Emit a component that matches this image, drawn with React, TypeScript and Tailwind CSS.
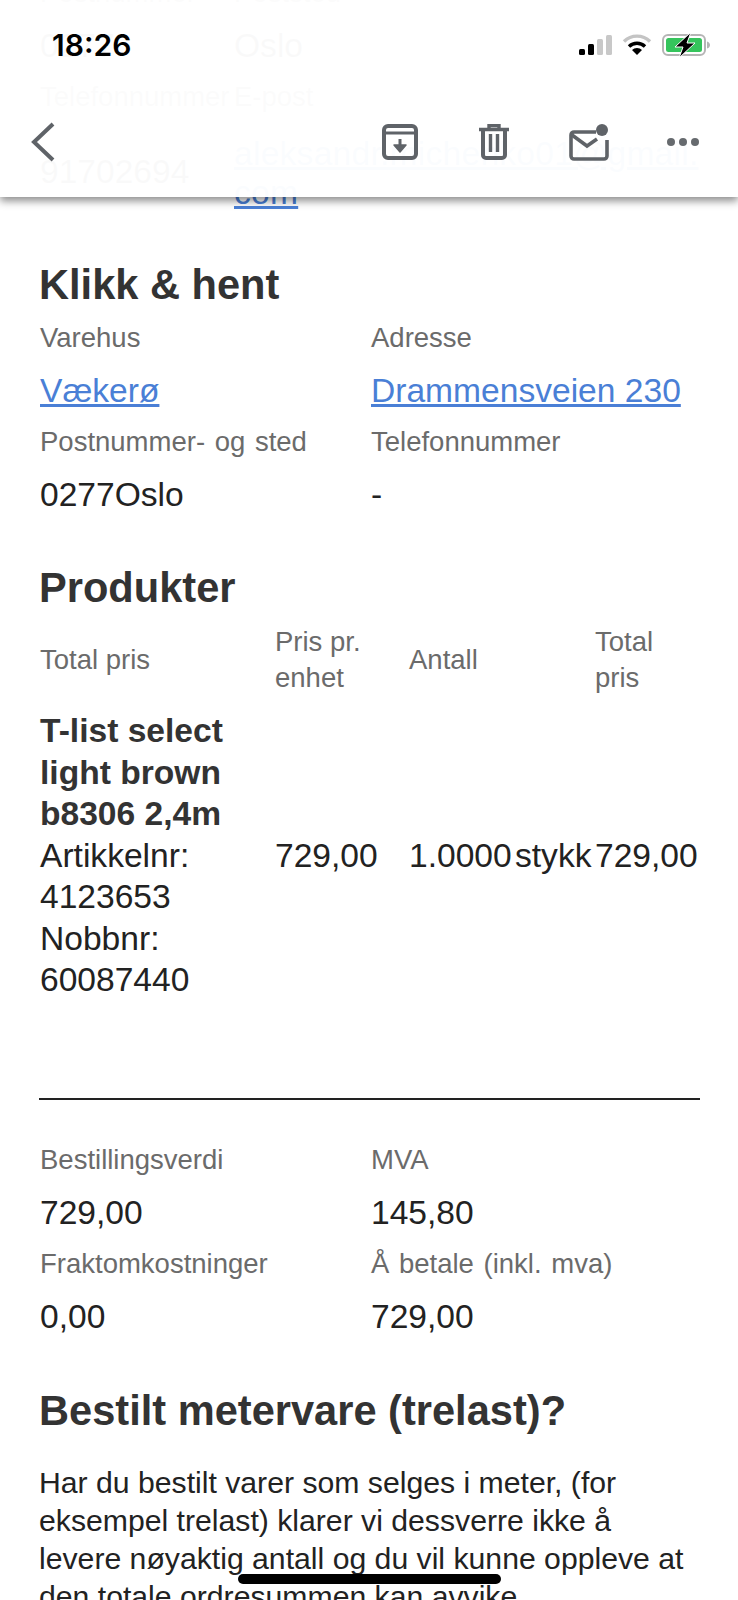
const sans = "font-['Liberation_Sans',Arial,sans-serif]";

function Field({ label, children }: { label: string; children: React.ReactNode }) {
  return (
    <div>
      <div className="h-[52px] text-[27.5px] leading-[50px] [word-spacing:2px] text-[#6b6b6b]">{label}</div>
      <div className="min-h-[52px] text-[33.6px] leading-[52px] text-[#222]">{children}</div>
    </div>
  );
}

function TopBar() {
  return (
    <div className="absolute top-0 left-0 w-full h-[197px] bg-white/[0.975] shadow-[0_4px_8px_rgba(0,0,0,0.45)]">
      <div className="flex items-center justify-between pl-[52px] pr-[27px] pt-[27px]">
        <span className="font-['Inter',sans-serif] text-[30px] leading-[36px] font-semibold text-black">18:26</span>
        <div className="flex items-center gap-[10px]">
          <svg width="34" height="22" viewBox="0 0 34 22">
            <rect x="1" y="15" width="6" height="6" rx="1.5" fill="#000" />
            <rect x="10" y="10" width="6" height="11" rx="1.5" fill="#000" />
            <rect x="19" y="5" width="6" height="16" rx="1.5" fill="#c8c8c8" />
            <rect x="28" y="1" width="6" height="20" rx="1.5" fill="#c8c8c8" />
          </svg>
          <svg width="30" height="22" viewBox="0 0 30 22">
            <path d="M2 7.5a18.5 18.5 0 0 1 26 0" fill="none" stroke="#c4c4c4" strokeWidth="3.4" />
            <path d="M7 12.5a11.5 11.5 0 0 1 16 0" fill="none" stroke="#000" strokeWidth="3.4" />
            <path d="M15 21l-5-5a7 7 0 0 1 10 0z" fill="#000" />
          </svg>
          <svg width="49" height="26" viewBox="0 0 49 26">
            <rect x="1" y="3" width="42" height="20" rx="5" fill="none" stroke="#b5b5b5" strokeWidth="2" />
            <rect x="4" y="6" width="36" height="14" rx="2.5" fill="#35c45c" />
            <path d="M45 9.5c2 .5 3 2 3 3.5s-1 3-3 3.5z" fill="#b5b5b5" />
            <path d="M29 0L13 15h8l-4 11 16-15h-8z" fill="#000" stroke="#fff" strokeWidth="1" />
          </svg>
        </div>
      </div>
      <div className="flex items-center pl-[30px] pr-[39px] pt-[59px]">
        <svg width="26" height="40" viewBox="0 0 26 40" className="mr-auto">
          <path d="M23 2L4 20l19 18" fill="none" stroke="#5f6368" strokeWidth="4" />
        </svg>
        <svg width="36" height="36" viewBox="0 0 36 36" className="mr-[60px]">
          <path d="M6 2h24a4 4 0 0 1 4 4v24a4 4 0 0 1-4 4H6a4 4 0 0 1-4-4V6a4 4 0 0 1 4-4z" fill="none" stroke="#5f6368" strokeWidth="4" />
          <path d="M3 9h30" stroke="#5f6368" strokeWidth="3" />
          <path d="M18 15v8" stroke="#5f6368" strokeWidth="3" />
          <path d="M12 21h12l-6 7z" fill="#5f6368" stroke="#5f6368" strokeWidth="1.5" strokeLinejoin="round" />
        </svg>
        <svg width="32" height="36" viewBox="0 0 32 36" className="mr-[59px]">
          <path d="M1 5.5h30M11 5V1.5h10V5" fill="none" stroke="#5f6368" strokeWidth="3.4" />
          <path d="M5 7v24a3 3 0 0 0 3 3h16a3 3 0 0 0 3-3V7" fill="none" stroke="#5f6368" strokeWidth="4" />
          <path d="M12.5 10v18M19.5 10v18" stroke="#5f6368" strokeWidth="3.4" />
        </svg>
        <svg width="40" height="37" viewBox="0 0 40 37" className="mr-[58px]">
          <path d="M27 8H5a3 3 0 0 0-3 3v21a3 3 0 0 0 3 3h30a3 3 0 0 0 3-3V16" fill="none" stroke="#5f6368" strokeWidth="3.6" />
          <path d="M3 11l15 11 10-7" fill="none" stroke="#5f6368" strokeWidth="3.6" />
          <circle cx="33" cy="6" r="6" fill="#5f6368" />
        </svg>
        <div className="flex gap-[4px]">
          <span className="size-[8px] rounded-full bg-[#666a6e]" />
          <span className="size-[8px] rounded-full bg-[#666a6e]" />
          <span className="size-[8px] rounded-full bg-[#666a6e]" />
        </div>
      </div>
    </div>
  );
}

export default function App() {
  return (
    <div className={`relative h-[1600px] w-[738px] overflow-hidden bg-white ${sans}`}>
      <div className="pl-[40px] pr-[38px] -mt-[32px]">
        {/* kundeinfo, ligger bak toppen */}
        <div className="grid grid-cols-[194px_1fr]">
          <Field label="Postnummer">0277</Field>
          <Field label="Poststed">Oslo</Field>
          <div>
            <div className="h-[52px] text-[27.5px] leading-[50px] text-[#6b6b6b] whitespace-nowrap">Telefonnummer</div>
            <div className="text-[33.6px] leading-[52px] text-[#222] pt-[22px]">91702694</div>
          </div>
          <div>
            <div className="h-[52px] text-[27.5px] leading-[50px] text-[#6b6b6b]">E-post</div>
            <a className="block text-[33.6px] leading-[39px] tracking-[0.25px] text-[#4a7fd6] underline break-all pt-[10px]">aleksandr.michenko01@gmail.com</a>
          </div>
        </div>

        <h2 className="mt-[47px] mb-[2px] text-[41.6px] leading-[52px] font-bold text-[#333] -ml-px">Klikk &amp; hent</h2>
        <div className="grid grid-cols-[331px_1fr]">
          <Field label="Varehus"><a className="text-[#4a7fd6] underline">Vækerø</a></Field>
          <Field label="Adresse"><a className="text-[#4a7fd6] underline">Drammensveien 230</a></Field>
          <Field label="Postnummer- og sted">0277Oslo</Field>
          <Field label="Telefonnummer">-</Field>
        </div>

        <h2 className="mt-[41px] text-[41.6px] leading-[52px] font-bold text-[#333] -ml-px">Produkter</h2>
        <div className="mt-[10px] grid grid-cols-[235px_134px_186px_1fr] items-center text-[27.5px] leading-[36px] text-[#6b6b6b]">
          <div>Total pris</div>
          <div>Pris pr.<br />enhet</div>
          <div>Antall</div>
          <div>Total<br />pris</div>
        </div>
        <div className="mt-[14px] grid grid-cols-[235px_134px_106px_80px_1fr] items-center text-[33.6px] leading-[41.5px] text-[#222]">
          <div>
            <div className="font-bold text-[#333]">T-list select<br />light brown<br />b8306 2,4m</div>
            <div>Artikkelnr:<br />4123653<br />Nobbnr:<br />60087440</div>
          </div>
          <div className="whitespace-nowrap">729,00</div>
          <div className="whitespace-nowrap">1.0000</div>
          <div className="whitespace-nowrap">stykk</div>
          <div className="whitespace-nowrap">729,00</div>
        </div>

        <div className="mt-[97px] h-[2px] bg-[#222] -ml-px" />

        <div className="mt-[35px] grid grid-cols-[331px_1fr]">
          <Field label="Bestillingsverdi">729,00</Field>
          <Field label="MVA">145,80</Field>
          <Field label="Fraktomkostninger">0,00</Field>
          <Field label="Å betale (inkl. mva)">729,00</Field>
        </div>

        <h2 className="mt-[42px] text-[41.6px] leading-[52px] font-bold text-[#333] -ml-px">Bestilt metervare (trelast)?</h2>
        <p className="mt-[27px] text-[30.2px] leading-[38px] text-[#222] -ml-px">
          Har du bestilt varer som selges i meter, (for eksempel trelast) klarer vi dessverre ikke å levere nøyaktig antall og du vil kunne oppleve at den totale ordresummen kan avvike
        </p>
      </div>

      <TopBar />
      <div className="absolute bottom-[16px] left-[238px] h-[10px] w-[263px] rounded-full bg-black" />
    </div>
  );
}
